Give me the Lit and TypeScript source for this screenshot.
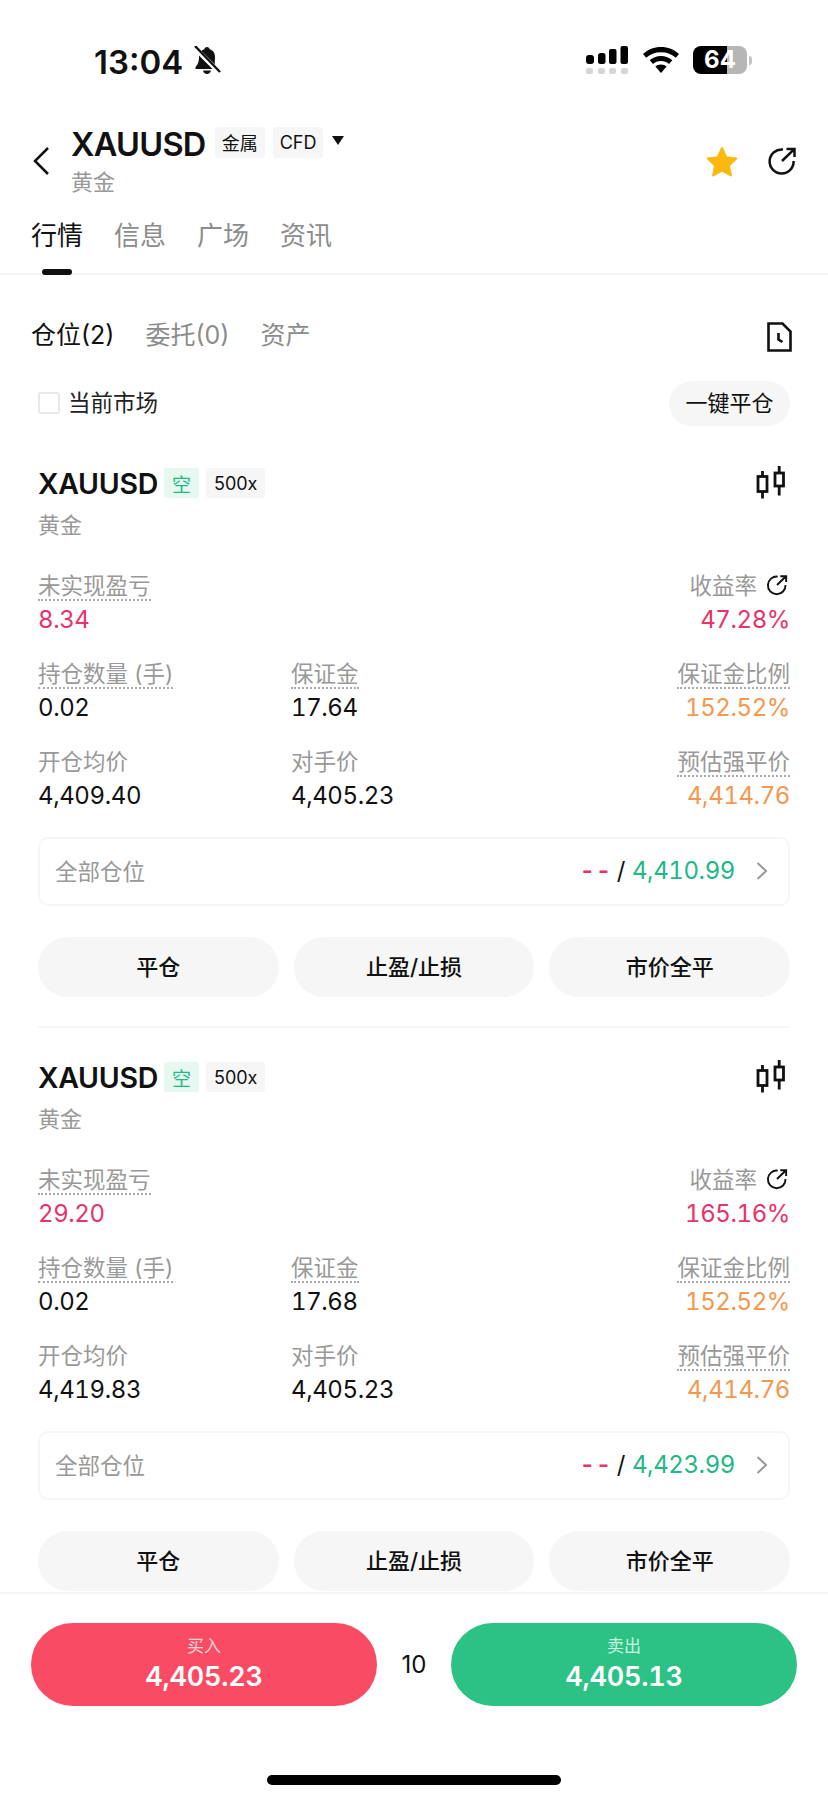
import { LitElement, html, css } from "lit";
import { customElement } from "lit/decorators.js";

type Cell = { label: string; value: string; dotted?: boolean; tone?: string };

type Position = {
  pnl: string;
  rate: string;
  qty: string;
  margin: string;
  ratio: string;
  open: string;
  counter: string;
  liq: string;
  target: string;
};

const positions: Position[] = [
  {
    pnl: "8.34",
    rate: "47.28%",
    qty: "0.02",
    margin: "17.64",
    ratio: "152.52%",
    open: "4,409.40",
    counter: "4,405.23",
    liq: "4,414.76",
    target: "4,410.99",
  },
  {
    pnl: "29.20",
    rate: "165.16%",
    qty: "0.02",
    margin: "17.68",
    ratio: "152.52%",
    open: "4,419.83",
    counter: "4,405.23",
    liq: "4,414.76",
    target: "4,423.99",
  },
];

const shareIcon = (size: number, sw: number) => html`<svg
  width=${size}
  height=${size}
  viewBox="0 0 30 30"
  fill="none"
  stroke="#111"
  stroke-width=${sw}
>
  <path d="M16 3.600A12 12 0 1 0 26.600 15" />
  <path d="M15 15 27 3.400M19.500 3h8v8" />
</svg>`;

const candleIcon = html`<svg width="29" height="33" viewBox="0 0 29 33" fill="none" stroke="#111" stroke-width="2.800">
  <rect x="2" y="10.500" width="9" height="15" />
  <path d="M6.500 5v5M6.500 26v6.500" />
  <rect x="19" y="7" width="8.500" height="13" />
  <path d="M23.200 0v7M23.200 20v9.500" />
</svg>`;

@customElement("app-root")
export class AppRoot extends LitElement {
  static styles = css`
    :host {
      display: block;
      width: 828px;
      height: 1800px;
      background: #fff;
      color: #111;
      font-family: Inter, "Noto Sans CJK SC", sans-serif;
      overflow: hidden;
    }

    .page {
      height: 1800px;
      display: flex;
      flex-direction: column;
    }

    .main {
      flex: 1;
      min-height: 0;
      overflow: hidden;
    }

    /* status bar */

    .status {
      height: 122px;
      box-sizing: border-box;
      padding: 42px 0 0 94px;
      display: flex;
      align-items: flex-start;
    }

    .time {
      font-size: 33px;
      line-height: 41px;
      font-weight: 600;
      width: 99px;
    }

    .bell {
      margin-top: 4px;
    }

    .status-right {
      margin-left: auto;
      margin-right: 81px;
      display: flex;
      align-items: flex-start;
      gap: 14px;
      padding-top: 4px;
    }

    .battery {
      width: 54px;
      height: 28px;
      border-radius: 8px;
      background: linear-gradient(90deg, #000 63%, #b6b6b6 63%);
      color: #fff;
      font-size: 24px;
      line-height: 28px;
      font-weight: 700;
      text-align: center;
      position: relative;
    }

    .battery::after {
      content: "";
      position: absolute;
      right: -5px;
      top: 10px;
      width: 3px;
      height: 9px;
      border-radius: 0 3px 3px 0;
      background: #c4c4c4;
    }

    /* nav */

    .nav {
      height: 78px;
      display: flex;
      align-items: center;
      padding: 0 31px 0 33px;
    }

    .nav-title {
      margin-left: 22px;
      margin-top: 3px;
    }

    .title-row {
      display: flex;
      align-items: center;
      height: 40px;
    }

    .title {
      font-size: 32.500px;
      font-weight: 600;
      letter-spacing: -0.7px;
      margin-right: 9px;
    }

    .tag {
      height: 31px;
      padding: 0 7px;
      margin-right: 8px;
      margin-bottom: 4px;
      display: flex;
      align-items: center;
      background: #f6f6f6;
      border-radius: 3px;
      font-size: 18px;
    }

    .caret {
      margin-left: 1px;
      margin-top: -7px;
      width: 0;
      height: 0;
      border-left: 6.500px solid transparent;
      border-right: 6.500px solid transparent;
      border-top: 9px solid #111;
    }

    .sub {
      font-size: 22px;
      line-height: 37px;
      color: #999;
    }

    .nav-actions {
      margin-left: auto;
      display: flex;
      align-items: center;
      gap: 29px;
    }

    /* tabs */

    .tabs {
      height: 55px;
      padding: 18px 31px 0;
      display: flex;
      gap: 31px;
      border-bottom: 2px solid #f6f6f6;
    }

    .tab {
      position: relative;
      font-size: 26px;
      line-height: 36px;
      color: #8c8c8c;
      height: 36px;
    }

    .tab.active {
      color: #111;
    }

    .tab.active::after {
      content: "";
      position: absolute;
      left: 11px;
      top: 51px;
      width: 30px;
      height: 6px;
      border-radius: 3px;
      background: #111;
    }

    .subtabs {
      padding: 42px 36px 0 31px;
      display: flex;
      align-items: center;
      gap: 31px;
      height: 36px;
    }

    .subtab {
      font-size: 25px;
      line-height: 36px;
      color: #8c8c8c;
    }

    .subtab.active {
      color: #111;
    }

    .doc {
      margin-left: auto;
      margin-top: 4px;
    }

    .filter {
      margin: 28px 38px 8px;
      display: flex;
      align-items: center;
      height: 45px;
    }

    .check {
      width: 18px;
      height: 18px;
      border: 2px solid #e8e8e8;
      border-radius: 3px;
      margin-right: 8px;
      margin-top: -2px;
    }

    .filter-label {
      font-size: 22.500px;
      color: #222;
      padding-bottom: 6px;
    }

    .pill {
      margin-left: auto;
      width: 121px;
      height: 45px;
      border-radius: 23px;
      background: #f6f6f6;
      font-size: 22px;
      line-height: 45px;
      text-align: center;
    }

    /* position card */

    .position {
      margin: 0 38px;
      padding: 34px 0 29px;
      border-bottom: 2px solid #f7f7f7;
    }

    .pos-head {
      height: 30px;
      display: flex;
      align-items: center;
    }

    .pos-name {
      font-size: 28.500px;
      font-weight: 600;
      letter-spacing: -0.3px;
      margin-right: 6px;
    }

    .pos-tag {
      height: 30px;
      box-sizing: border-box;
      padding: 0 8px;
      margin-right: 7px;
      display: flex;
      align-items: center;
      border-radius: 3px;
      background: #f6f6f6;
      font-size: 18px;
    }

    .pos-tag.short {
      background: #e7f8f1;
      color: #1fb985;
      font-size: 19px;
    }

    .pos-candle {
      margin-left: auto;
      margin-right: 5px;
      margin-top: 3px;
    }

    .pos-sub {
      margin-top: 12px;
      font-size: 22px;
      line-height: 30px;
      color: #999;
    }

    .grid {
      margin-top: 32px;
      display: grid;
      grid-template-columns: 253px 1fr auto;
      row-gap: 23px;
    }

    .cell.end {
      grid-column: 3;
      text-align: right;
    }

    .label {
      display: inline-block;
      box-sizing: border-box;
      height: 29px;
      font-size: 22.500px;
      line-height: 28px;
      color: #999;
      vertical-align: top;
    }

    .label.dotted {
      border-bottom: 2px dotted #aaa;
    }

    .label-row {
      height: 29px;
      display: flex;
      align-items: flex-start;
    }

    .end .label-row {
      justify-content: flex-end;
    }

    .refresh {
      margin: 2px 2px 0 9px;
    }

    .value {
      margin-top: 1px;
      font-size: 24px;
      letter-spacing: -0.4px;
      line-height: 35px;
      color: #111;
      font-variant-numeric: tabular-nums;
    }

    .up {
      color: #e8336a;
    }

    .warn {
      color: #f5974f;
    }

    .all {
      margin-top: 24px;
      height: 69px;
      box-sizing: border-box;
      border: 2px solid #f6f6f6;
      border-radius: 10px;
      padding: 0 20px 2px 15px;
      display: flex;
      align-items: center;
    }

    .all-label {
      font-size: 22.500px;
      color: #999;
      margin-bottom: 2px;
    }

    .all-value {
      margin-left: auto;
      font-size: 24px;
      letter-spacing: -0.4px;
      display: flex;
      align-items: center;
      font-variant-numeric: tabular-nums;
    }

    .dash {
      color: #e8336a;
      letter-spacing: 0.5px;
      font-weight: 600;
      margin-right: 5px;
    }

    .slash {
      margin-right: 7px;
    }

    .green {
      color: #1db884;
    }

    .chev {
      margin-left: 21px;
    }

    .actions {
      margin-top: 31px;
      display: grid;
      grid-template-columns: repeat(3, 1fr);
      gap: 15px;
    }

    .action {
      height: 60px;
      border-radius: 30px;
      background: #f6f6f6;
      font-size: 22px;
      font-weight: 500;
      line-height: 60px;
      text-align: center;
    }

    /* footer */

    .footer {
      height: 208px;
      box-sizing: border-box;
      border-top: 2px solid #f7f7f7;
      background: #fff;
      padding: 29px 31px 0;
      display: flex;
      flex-direction: column;
    }

    .trade {
      display: flex;
      align-items: center;
    }

    .trade-btn {
      width: 346px;
      height: 83px;
      border-radius: 42px;
      display: flex;
      flex-direction: column;
      align-items: center;
      color: #fff;
    }

    .trade-btn.buy {
      background: #f94c64;
    }

    .trade-btn.sell {
      background: #2cc285;
    }

    .trade-label {
      font-size: 17px;
      line-height: 24px;
      margin-top: 11px;
      opacity: 0.75;
    }

    .trade-price {
      font-size: 27px;
      font-weight: 600;
      letter-spacing: -0.2px;
      line-height: 36px;
      margin-top: 1px;
      font-variant-numeric: tabular-nums;
    }

    .lots {
      flex: 1;
      text-align: center;
      font-size: 24px;
    }

    .home {
      width: 294px;
      height: 10px;
      border-radius: 5px;
      background: #000;
      margin: 69px auto 0;
    }
  `;

  private cell(c: Cell, end = false) {
    return html`<div class="cell ${end ? "end" : ""}">
      <div class="label-row">
        <span class="label ${c.dotted ? "dotted" : ""}">${c.label}</span>
      </div>
      <div class="value ${c.tone ?? ""}">${c.value}</div>
    </div>`;
  }

  private renderPosition(p: Position) {
    return html`<div class="position">
      <div class="pos-head">
        <span class="pos-name">XAUUSD</span>
        <span class="pos-tag short">空</span>
        <span class="pos-tag">500x</span>
        <span class="pos-candle">${candleIcon}</span>
      </div>
      <div class="pos-sub">黄金</div>

      <div class="grid">
        ${this.cell({ label: "未实现盈亏", value: p.pnl, dotted: true, tone: "up" })}
        <div class="cell end">
          <div class="label-row">
            <span class="label">收益率</span>
            <span class="refresh">${shareIcon(22, 2.6)}</span>
          </div>
          <div class="value up">${p.rate}</div>
        </div>
        ${this.cell({ label: "持仓数量 (手)", value: p.qty, dotted: true })}
        ${this.cell({ label: "保证金", value: p.margin, dotted: true })}
        ${this.cell({ label: "保证金比例", value: p.ratio, dotted: true, tone: "warn" }, true)}
        ${this.cell({ label: "开仓均价", value: p.open })}
        ${this.cell({ label: "对手价", value: p.counter })}
        ${this.cell({ label: "预估强平价", value: p.liq, dotted: true, tone: "warn" }, true)}
      </div>

      <div class="all">
        <span class="all-label">全部仓位</span>
        <span class="all-value">
          <span class="dash">--</span>
          <span class="slash">/</span>
          <span class="green">${p.target}</span>
        </span>
        <svg class="chev" width="12" height="18" viewBox="0 0 12 18" fill="none" stroke="#999" stroke-width="2">
          <path d="M1.500 1 10 9l-8.500 8" />
        </svg>
      </div>

      <div class="actions">
        <div class="action">平仓</div>
        <div class="action">止盈/止损</div>
        <div class="action">市价全平</div>
      </div>
    </div>`;
  }

  render() {
    return html`<div class="page">
      <div class="main">
        <div class="status">
          <span class="time">13:04</span>
          <svg class="bell" width="28" height="29" viewBox="0 0 28 29">
            <path
              fill="#111"
              d="M14 1c-1.500 0-2.500 1-2.700 2.300C7.500 4.500 6 7.500 6 11c0 5-1 7-3.500 10v2h21v-2C21 18 22 16 22 11c0-3.500-1.500-6.500-5.300-7.700C16.500 2 15.500 1 14 1ZM10 24.500c.5 2 2 3.500 4 3.500s3.500-1.500 4-3.500Z"
            />
            <path d="M1 1l26 26" stroke="#fff" stroke-width="5" />
            <path d="M2 0l25 26" stroke="#111" stroke-width="2.400" />
          </svg>
          <div class="status-right">
            <svg width="43" height="28" viewBox="0 0 43 28">
              <g fill="#000">
                <rect x="0" y="9" width="8" height="9" rx="3" />
                <rect x="12" y="7" width="7.500" height="11" rx="2.500" />
                <rect x="23" y="3" width="7.500" height="15" rx="2" />
                <rect x="34.500" y="0" width="7.500" height="18" rx="2" />
              </g>
              <g fill="#d6d6d6">
                <rect x="0" y="22" width="7" height="6" rx="2" />
                <rect x="12" y="22" width="7" height="6" rx="2" />
                <rect x="23" y="22" width="7" height="6" rx="2" />
                <rect x="35" y="22" width="7" height="6" rx="2" />
              </g>
            </svg>
            <svg width="36" height="28" viewBox="0 0 36 28">
              <path
                fill="#000"
                d="M18 1C11 1 5 3.500 0 8l3.200 3.800C7 8.300 12 6.300 18 6.300s11 2 14.800 5.500L36 8C31 3.500 25 1 18 1Z"
              />
              <path
                fill="#000"
                d="M18 10c-4.500 0-8.300 1.600-11.300 4.300l3.300 3.800c2.100-1.900 4.800-3 8-3s5.900 1.100 8 3l3.300-3.800C26.300 11.600 22.500 10 18 10Z"
              />
              <path fill="#000" d="M18 18.500c-2.200 0-4.200.8-5.600 2.100L18 27l5.600-6.400c-1.400-1.300-3.400-2.100-5.600-2.100Z" />
            </svg>
            <div class="battery">64</div>
          </div>
        </div>

        <div class="nav">
          <svg width="16" height="28" viewBox="0 0 16 28" fill="none" stroke="#111" stroke-width="2.500">
            <path d="M15 1 2 14l13 13" />
          </svg>
          <div class="nav-title">
            <div class="title-row">
              <span class="title">XAUUSD</span>
              <span class="tag">金属</span>
              <span class="tag">CFD</span>
              <span class="caret"></span>
            </div>
            <div class="sub">黄金</div>
          </div>
          <div class="nav-actions">
            <svg width="32" height="31" viewBox="0 0 32 31">
              <path
                fill="#fbb90f"
                stroke="#fbb90f"
                stroke-width="2"
                stroke-linejoin="round"
                d="M16 2l4.300 9.300 10 1.200-7.400 6.900 2 10L16 24.500 7.100 29.400l2-10-7.400-6.900 10-1.200Z"
              />
            </svg>
            ${shareIcon(30, 2.5)}
          </div>
        </div>

        <div class="tabs">
          <span class="tab active">行情</span>
          <span class="tab">信息</span>
          <span class="tab">广场</span>
          <span class="tab">资讯</span>
        </div>

        <div class="subtabs">
          <span class="subtab active">仓位(2)</span>
          <span class="subtab">委托(0)</span>
          <span class="subtab">资产</span>
          <svg class="doc" width="25" height="30" viewBox="0 0 25 30" fill="none" stroke="#111" stroke-width="2.600">
            <path d="M1.500 1.500h14l8 8v19h-22Z" />
            <path d="M11.500 11v6.500l4 2.500" />
          </svg>
        </div>

        <div class="filter">
          <span class="check"></span>
          <span class="filter-label">当前市场</span>
          <span class="pill">一键平仓</span>
        </div>

        ${positions.map((p) => this.renderPosition(p))}
      </div>

      <div class="footer">
        <div class="trade">
          <div class="trade-btn buy">
            <span class="trade-label">买入</span>
            <span class="trade-price">4,405.23</span>
          </div>
          <span class="lots">10</span>
          <div class="trade-btn sell">
            <span class="trade-label">卖出</span>
            <span class="trade-price">4,405.13</span>
          </div>
        </div>
        <div class="home"></div>
      </div>
    </div>`;
  }
}
